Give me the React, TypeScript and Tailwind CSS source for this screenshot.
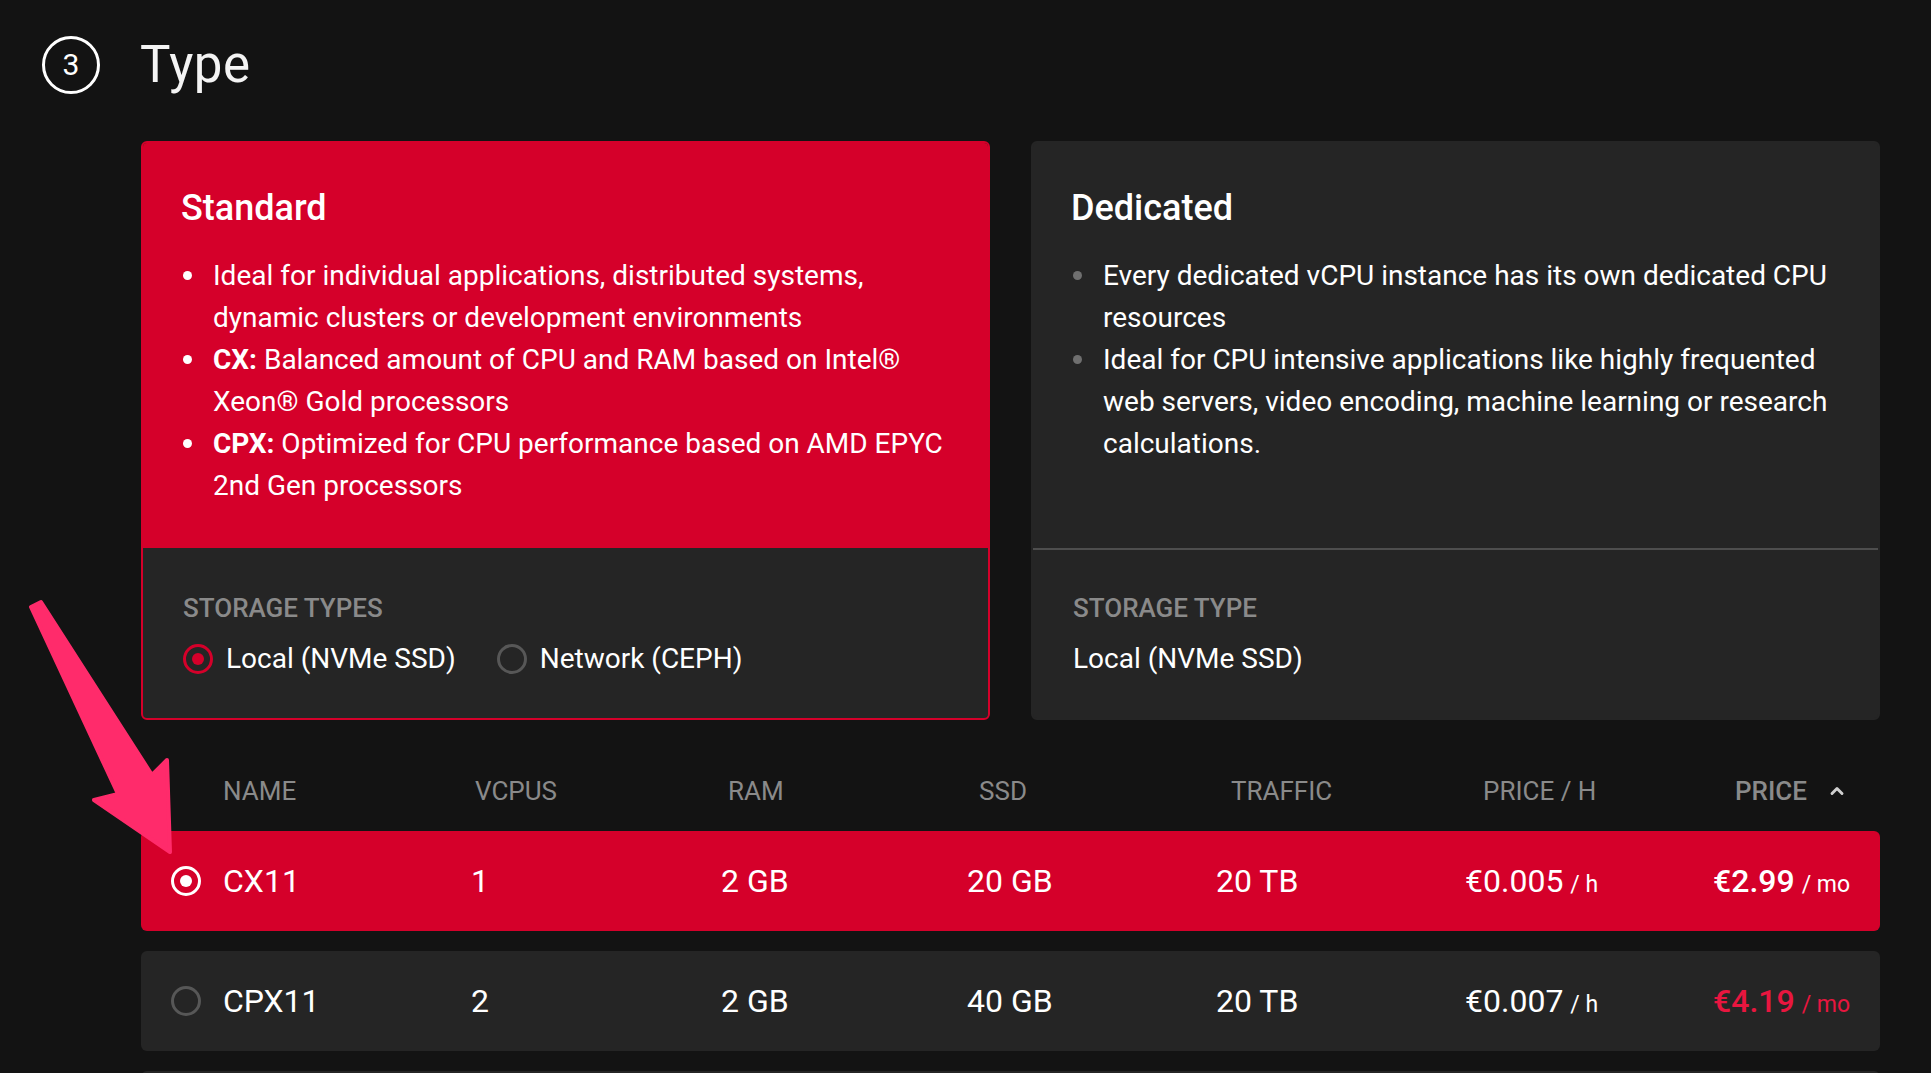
import { ChevronUp } from "lucide-react";

type Server = {
    name: string;
    vcpu: string;
    ram: string;
    ssd: string;
    traffic: string;
    hourly: string;
    monthly: string;
    selected?: boolean;
};

const servers: Server[] = [
    { name: "CX11", vcpu: "1", ram: "2 GB", ssd: "20 GB", traffic: "20 TB", hourly: "€0.005", monthly: "€2.99", selected: true },
    { name: "CPX11", vcpu: "2", ram: "2 GB", ssd: "40 GB", traffic: "20 TB", hourly: "€0.007", monthly: "€4.19" },
    { name: "CX21", vcpu: "2", ram: "4 GB", ssd: "40 GB", traffic: "20 TB", hourly: "€0.010", monthly: "€5.83" },
];

const Radio = ({ tone }: { tone: "red" | "white" | "off" }) => {
    if (tone === "off") {
        return <span className="block w-[30px] h-[30px] shrink-0 rounded-full border-[3px] border-[#575757]" />
    }
    if (tone === "white") {
        return (
            <span className="w-[30px] h-[30px] shrink-0 rounded-full border-[3px] border-white flex items-center justify-center">
                <span className="w-[12px] h-[12px] rounded-full bg-white" />
            </span>
        )
    }
    return (
        <span className="w-[30px] h-[30px] shrink-0 rounded-full border-[3px] border-[#d5002a] flex items-center justify-center">
            <span className="w-[12px] h-[12px] rounded-full bg-[#d5002a]" />
        </span>
    )
}

const Bullet = ({ children, gray }: { children: React.ReactNode; gray?: boolean }) => (
    <li className="flex">
        <span className={gray
            ? "mt-[16px] ml-[2px] w-[9px] h-[9px] shrink-0 rounded-full bg-[#6f6f6f]"
            : "mt-[16px] ml-[2px] w-[9px] h-[9px] shrink-0 rounded-full bg-white"} />
        <span className="ml-[21px]">{children}</span>
    </li>
)

const Arrow = () => (
    <svg className="absolute left-0 top-0 pointer-events-none" width="200" height="880" viewBox="0 0 200 880">
        <path
            d="M31 607 L118 794 L94 800 L170 852 L167 760 L152 775 L41 602 Z"
            fill="#ff2b6b"
            stroke="#ff2b6b"
            strokeWidth="4"
            strokeLinejoin="round"
        />
    </svg>
)

export default function App() {
    return (
        <div className="relative h-screen overflow-hidden bg-[#131313] text-white" style={{ fontFamily: "Roboto, 'Liberation Sans', sans-serif" }}>

            <div className="flex items-center pl-[42px] pt-[36px] gap-[40px]">
                <div className="w-[58px] h-[58px] rounded-full border-[3px] border-white flex items-center justify-center text-[30px] leading-none">
                    3
                </div>
                <h1 className="text-[51px] leading-[58px] font-normal tracking-[0.01em] text-[#f4f4f4]">Type</h1>
            </div>

            <div className="ml-[141px] mr-[51px] mt-[47px]">

                <div className="grid grid-cols-2 gap-[41px]">
                    {/* standard */}
                    <div className="rounded-md border-2 border-[#d5002a] overflow-hidden bg-[#252525]">
                        <div className="h-[405px] bg-[#d5002a] pt-[43px] px-[38px]">
                            <h2 className="text-[36px] leading-[44px] font-medium">Standard</h2>
                            <ul className="mt-[25px] text-[28px] leading-[42px]">
                                <Bullet>Ideal for individual applications, distributed systems, dynamic clusters or development environments</Bullet>
                                <Bullet><b className="font-bold">CX:</b> Balanced amount of CPU and RAM based on Intel® Xeon® Gold processors</Bullet>
                                <Bullet><b className="font-bold">CPX:</b> Optimized for CPU performance based on AMD EPYC 2nd Gen processors</Bullet>
                            </ul>
                        </div>
                        <div className="h-[170px] pt-[42px] px-[40px]">
                            <p className="text-[26px] leading-[36px] font-medium uppercase text-[#8a8a8a]">Storage types</p>
                            <div className="mt-[12px] flex items-center text-[28px] leading-[42px]">
                                <Radio tone="red" />
                                <span className="ml-[13px]">Local (NVMe SSD)</span>
                                <span className="ml-[41px] flex"><Radio tone="off" /></span>
                                <span className="ml-[13px]">Network (CEPH)</span>
                            </div>
                        </div>
                    </div>

                    {/* dedicated */}
                    <div className="rounded-md border-2 border-[#252525] overflow-hidden bg-[#252525]">
                        <div className="h-[405px] pt-[43px] px-[38px]">
                            <h2 className="text-[36px] leading-[44px] font-medium">Dedicated</h2>
                            <ul className="mt-[25px] text-[28px] leading-[42px]">
                                <Bullet gray>Every dedicated vCPU instance has its own dedicated CPU resources</Bullet>
                                <Bullet gray>Ideal for CPU intensive applications like highly frequented web servers, video encoding, machine learning or research calculations.</Bullet>
                            </ul>
                        </div>
                        <div className="h-[170px] border-t-2 border-[#4e4e4e] pt-[40px] px-[40px]">
                            <p className="text-[26px] leading-[36px] font-medium uppercase text-[#8a8a8a]">Storage type</p>
                            <p className="mt-[12px] text-[28px] leading-[42px]">Local (NVMe SSD)</p>
                        </div>
                    </div>
                </div>

                {/* table head */}
                <div className="pt-[52px] pb-[21px] pl-[82px] grid grid-cols-[252px_253px_251px_252px_252px_252px_auto] text-[26px] leading-[38px] uppercase text-[#8a8a8a]">
                    <span>Name</span>
                    <span>vCPUs</span>
                    <span>RAM</span>
                    <span>SSD</span>
                    <span>Traffic</span>
                    <span>Price / h</span>
                    <span className="flex items-center font-medium">
                        Price
                        <ChevronUp className="ml-[20px] text-[#cfcfcf]" size={20} strokeWidth={3.5} />
                    </span>
                </div>

                <div className="flex flex-col gap-[20px]">
                    {servers.map((s) => (
                        <div
                            key={s.name}
                            className={s.selected
                                ? "h-[100px] rounded-md bg-[#d5002a] flex items-center pl-[30px]"
                                : "h-[100px] rounded-md bg-[#252525] flex items-center pl-[30px]"}
                        >
                            <Radio tone={s.selected ? "white" : "off"} />
                            <div className="ml-[22px] pt-[4px] grid grid-cols-[248px_250px_246px_249px_249px_248px_auto] items-baseline text-[32px] leading-[40px]">
                                <span>{s.name}</span>
                                <span>{s.vcpu}</span>
                                <span>{s.ram}</span>
                                <span>{s.ssd}</span>
                                <span>{s.traffic}</span>
                                <span>{s.hourly}<span className="ml-[7px] text-[23px]">/ h</span></span>
                                <span className={s.selected ? "font-medium text-white" : "font-medium text-[#e8163f]"}>
                                    {s.monthly}
                                    <span className="ml-[7px] text-[23px] font-normal">/ mo</span>
                                </span>
                            </div>
                        </div>
                    ))}
                </div>
            </div>

            <Arrow />
        </div>
    )
}
